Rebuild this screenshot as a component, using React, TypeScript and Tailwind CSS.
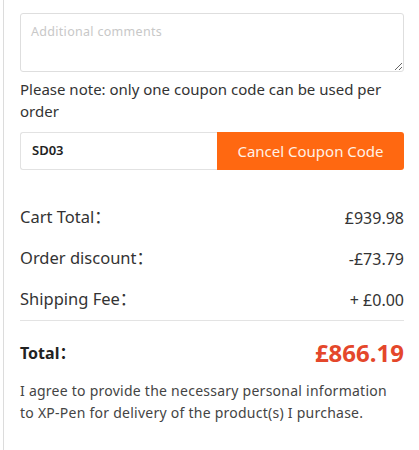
export default function App() {
  const rows = [
    { label: 'Cart Total：', value: '£939.98' },
    { label: 'Order discount：', value: '-£73.79' },
    { label: 'Shipping Fee：', value: '+ £0.00' },
  ];

  return (
    <div
      className="w-[419px] h-[450px] bg-white overflow-hidden"
      style={{ fontFamily: '"Noto Sans", "Open Sans", "Noto Sans CJK SC", sans-serif' }}
    >
      <div className="ml-[3px] h-full border-l border-[#dcdcdc] pl-[16px] pr-[15px] pt-[13px]">
        <textarea
          placeholder="Additional comments"
          className="block w-full h-[59px] rounded-[3px] border border-[#dedede] px-[10px] pt-[9px] text-[12.5px] tracking-[0.3px] text-[#333] placeholder:text-[#c8c8c8] outline-none resize-y"
        />

        <p className="mt-[6px] text-[15px] leading-[22px] text-[#333]">
          Please note: only one coupon code can be used per order
        </p>

        <div className="mt-[10px] flex h-[38px]">
          <div className="flex w-[197px] items-center rounded-l-[3px] border border-r-0 border-[#e2e2e2] px-[11px] text-[13px] font-semibold text-[#222]">
            SD03
          </div>
          <button className="flex-1 rounded-r-[3px] bg-[#ff6811] text-[15px] text-[#fff1e6]">
            Cancel Coupon Code
          </button>
        </div>

        <div className="mt-[27px]">
          {rows.map((r) => (
            <div
              key={r.label}
              className="flex h-[41px] items-center justify-between text-[16.5px] text-[#333]"
            >
              <span>{r.label}</span>
              <span className="text-[16px]">{r.value}</span>
            </div>
          ))}
        </div>

        <div className="border-t border-[#e3e3e3]" />

        <div className="mt-[14px] flex items-center justify-between">
          <span className="text-[16px] font-bold text-[#222]">Total：</span>
          <span className="text-[24px] font-bold text-[#e4472b]">£866.19</span>
        </div>

        <p className="mt-[9px] text-[14px] leading-[22px] tracking-[0.25px] text-[#444]">
          I agree to provide the necessary personal information to XP-Pen for delivery of the
          product(s) I purchase.
        </p>
      </div>
    </div>
  );
}
